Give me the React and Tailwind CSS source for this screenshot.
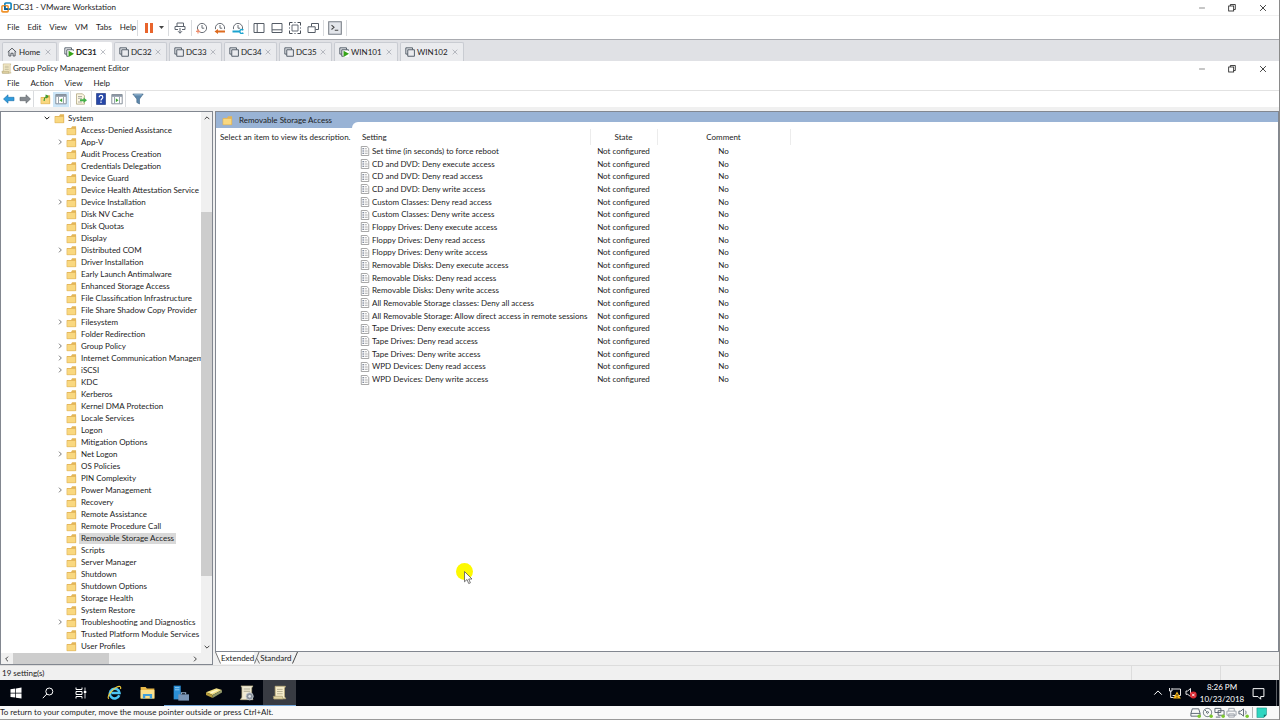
import { useState } from "react";

const vmTabs = [
  { name: "DC31", running: true, width: "w-[53px]" },
  { name: "DC32", width: "w-[53px]" },
  { name: "DC33", width: "w-[53px]" },
  { name: "DC34", width: "w-[53px]" },
  { name: "DC35", width: "w-[53px]" },
  { name: "WIN101", running: true, width: "w-[64px]" },
  { name: "WIN102", width: "w-[64px]" },
];

const treeItems = [
  { name: "Access-Denied Assistance" },
  { name: "App-V", children: true },
  { name: "Audit Process Creation" },
  { name: "Credentials Delegation" },
  { name: "Device Guard" },
  { name: "Device Health Attestation Service" },
  { name: "Device Installation", children: true },
  { name: "Disk NV Cache" },
  { name: "Disk Quotas" },
  { name: "Display" },
  { name: "Distributed COM", children: true },
  { name: "Driver Installation" },
  { name: "Early Launch Antimalware" },
  { name: "Enhanced Storage Access" },
  { name: "File Classification Infrastructure" },
  { name: "File Share Shadow Copy Provider" },
  { name: "Filesystem", children: true },
  { name: "Folder Redirection" },
  { name: "Group Policy", children: true },
  { name: "Internet Communication Management", children: true },
  { name: "iSCSI", children: true },
  { name: "KDC" },
  { name: "Kerberos" },
  { name: "Kernel DMA Protection" },
  { name: "Locale Services" },
  { name: "Logon" },
  { name: "Mitigation Options" },
  { name: "Net Logon", children: true },
  { name: "OS Policies" },
  { name: "PIN Complexity" },
  { name: "Power Management", children: true },
  { name: "Recovery" },
  { name: "Remote Assistance" },
  { name: "Remote Procedure Call" },
  { name: "Removable Storage Access" },
  { name: "Scripts" },
  { name: "Server Manager" },
  { name: "Shutdown" },
  { name: "Shutdown Options" },
  { name: "Storage Health" },
  { name: "System Restore" },
  { name: "Troubleshooting and Diagnostics", children: true },
  { name: "Trusted Platform Module Services" },
  { name: "User Profiles" },
];

const settings = [
  "Set time (in seconds) to force reboot",
  "CD and DVD: Deny execute access",
  "CD and DVD: Deny read access",
  "CD and DVD: Deny write access",
  "Custom Classes: Deny read access",
  "Custom Classes: Deny write access",
  "Floppy Drives: Deny execute access",
  "Floppy Drives: Deny read access",
  "Floppy Drives: Deny write access",
  "Removable Disks: Deny execute access",
  "Removable Disks: Deny read access",
  "Removable Disks: Deny write access",
  "All Removable Storage classes: Deny all access",
  "All Removable Storage: Allow direct access in remote sessions",
  "Tape Drives: Deny execute access",
  "Tape Drives: Deny read access",
  "Tape Drives: Deny write access",
  "WPD Devices: Deny read access",
  "WPD Devices: Deny write access",
];

/* ---------- icons ---------- */

function Icon({ size = 12, children }) {
  return (
    <svg width={size} height={size} viewBox="0 0 12 12" fill="none" className="block shrink-0" aria-hidden="true">
      {children}
    </svg>
  );
}

const VmwareLogo = () => (
  <Icon size={11}>
    <rect x="4.2" y="1" width="6.8" height="6.8" rx="1" stroke="#0a7fb8" strokeWidth="1.7" />
    <rect x="1" y="4" width="6.8" height="6.8" rx="1" stroke="#f0932b" strokeWidth="1.7" />
    <path d="M4.2 4v3.8H8" stroke="#0a5f95" strokeWidth="1.7" />
  </Icon>
);

const MinimizeIcon = () => (
  <Icon size={10}>
    <path d="M2.500 6h7" stroke="#666" strokeWidth="0.900" />
  </Icon>
);

const RestoreIcon = () => (
  <Icon size={10}>
    <rect x="2" y="3.6" width="6" height="6" stroke="#222" />
    <path d="M4 3.6V1.8h6v6H8" stroke="#222" />
  </Icon>
);

const CloseIcon = ({ size = 10, color = "#222" }) => (
  <Icon size={size}>
    <path d="M2.500 2.500l7 7M9.500 2.500l-7 7" stroke={color} />
  </Icon>
);

const PauseIcon = () => (
  <Icon>
    <rect x="2" y="1" width="3" height="10" fill="#e8642c" />
    <rect x="7" y="1" width="3" height="10" fill="#e8642c" />
  </Icon>
);

const CaretIcon = () => (
  <svg width="5" height="3" viewBox="0 0 5 3" aria-hidden="true">
    <path d="M0 0h5L2.500 3z" fill="#444" />
  </svg>
);

const SendKeysIcon = () => (
  <Icon>
    <path d="M3 4.500V1h6.500v3.500M1 4.500h10v3H8M1 4.500v3h3" stroke="#5d646e" />
    <path d="M6 6v5.200M4 9.200l2 2 2-2" stroke="#5d646e" />
  </Icon>
);

const SnapshotIcon = ({ accent, kind }) => (
  <Icon>
    <circle cx="6" cy="6" r="4.600" stroke="#5a6069" strokeWidth="0.900" />
    <path d="M6 3v3.200h2.200" stroke="#5a6069" strokeWidth="0.900" />
    {kind === "take" && <path d="M2 7v4.500M0 9.300h4.200" stroke={accent} strokeWidth="1.200" />}
    {kind === "revert" && (
      <>
        <path d="M0 7.200h12V12H0z" fill="#fff" />
        <path d="M0.500 9.500L4 7v1.500h7v2H4V12z" fill={accent} />
      </>
    )}
    {kind === "manage" && (
      <>
        <path d="M0 7.200h12V12H0z" fill="#fff" />
        <path d="M.5 9.500h7" stroke={accent} strokeWidth="2" />
        <path d="M11.300 8.200a2 2 0 1 0 0 2.600" stroke={accent} strokeWidth="1.500" />
      </>
    )}
  </Icon>
);

const SidebarIcon = () => (
  <Icon>
    <path d="M1 1.500h10v9H1zM4.200 1.500v9" stroke="#555c66" />
  </Icon>
);

const ThumbnailBarIcon = () => (
  <Icon>
    <path d="M1 1.500h10v9H1zM1 7.800h10" stroke="#555c66" />
  </Icon>
);

const FullScreenIcon = () => (
  <Icon>
    <path d="M.5 3.500v-3h3M8.500.5h3v3M11.500 8.500v3h-3M3.500 11.500h-3v-3" stroke="#454b54" />
    <path d="M3 3h6v6H3z" stroke="#666d77" />
    <path d="M5 .5h2M5 11.500h2M.5 5v2M11.500 5v2" stroke="#9aa0a8" />
  </Icon>
);

const UnityIcon = () => (
  <Icon>
    <path d="M4.500 4.500v-3h7v6h-3" stroke="#555c66" />
    <path d="M1 4.800h7.200v5.700H1z" stroke="#555c66" />
  </Icon>
);

const ConsoleIcon = () => (
  <Icon size={14}>
    <path d="M.6.600h10.800v10.800H.6z" stroke="#777d86" strokeWidth="0.900" fill="#e3e6eb" />
    <path d="M3 3.500l2.200 1.900L3 7.300M5.800 8h3" stroke="#444" strokeWidth="0.900" />
  </Icon>
);

const HomeIcon = () => (
  <Icon size={10}>
    <path d="M1 6l5-4.600L11 6M2.300 5.200v5.600h2.400V7.500h2.600v3.300h2.400V5.200" stroke="#4a5058" strokeWidth="1.100" />
  </Icon>
);

const VmIcon = ({ running }) => (
  <Icon size={10}>
    <path d="M3.300 8.500H1V1h8v2" stroke="#4a5560" strokeWidth="1.100" />
    <path d="M3.300 3.300h8v7.800h-8z" stroke="#4a5560" strokeWidth="1.100" />
    {running && (
      <>
        <path d="M5.500 4.500H12V12H5.500z" fill="#fff" />
        <path d="M5.500 4.500l6.500 3.700L5.500 12z" fill="#36a318" />
      </>
    )}
  </Icon>
);

const ScrollIcon = ({ size = 11 }) => (
  <Icon size={size}>
    <path d="M2.500 1h8.300l-.8 1.600v6.600l1 1.800H1.500L2.600 9.200z" fill="#f6ecc9" stroke="#b9a976" strokeWidth="0.600" />
    <path d="M4 3.500h4.500M4 5.200h4.500M4 7h4.500" stroke="#b1a98c" strokeWidth="0.700" />
    <path d="M1 9h7.300l.6 2.200H1.500z" fill="#e2d5a4" stroke="#a39668" strokeWidth="0.500" />
  </Icon>
);

const ArrowIcon = ({ color, edge, flip }) => (
  <Icon>
    <path
      d={flip ? "M11.500 6L7 1.800v2.500H1v3.400h6v2.500z" : "M.5 6L5 1.800v2.500h6v3.400H5v2.500z"}
      fill={color}
      stroke={edge}
      strokeWidth="0.600"
    />
  </Icon>
);

const FolderIcon = ({ up }) => (
  <Icon size={11}>
    <path d="M1 3.300h4.500l1.200-2h4.300v9.200H1z" fill="#e3b658" />
    <path d="M1 3.800h9.600v6.900H1z" fill="#f9d880" stroke="#d9a94c" strokeWidth="0.500" />
    {up && <path d="M4.500 7.500C4.500 4.500 6 3 8 2.500M6 1l2.600 1.300L7 4.500" stroke="#2f9a2f" strokeWidth="1.200" />}
  </Icon>
);

const PaneIcon = ({ right }) => (
  <Icon>
    <path d="M.8 1.500h10.400v9.300H.8z" fill="#fff" stroke="#7d8792" strokeWidth="0.900" />
    <path d="M1 2h10v1.800H1z" fill="#8c98a6" />
    <path d="M3.500 4v6.500M8.500 4v6.500" stroke="#8c98a6" strokeWidth="0.900" />
    <path d={right ? "M4.800 5.200L7.500 7.200 4.800 9.200z" : "M7.200 5.200L4.500 7.200l2.700 2z"} fill="#3fa535" />
  </Icon>
);

const ExportIcon = () => (
  <Icon>
    <path d="M1.500.8h6l2 2v8.400h-8z" fill="#fbf6e2" stroke="#a79c72" strokeWidth="0.700" />
    <path d="M3 3.500h4M3 5.300h4M3 9h4" stroke="#8e8e8e" strokeWidth="0.700" />
    <path d="M5 6.200h3.500V4.500L12 7.200 8.500 10V8.300H5z" fill="#43b049" />
  </Icon>
);

const HelpIcon = () => (
  <Icon>
    <path d="M1.500.5h9v11h-9z" fill="#2647a8" stroke="#162f78" strokeWidth="0.600" />
    <path d="M4.200 4.200c0-2.400 3.600-2.300 3.600 0C7.800 5.700 6 5.700 6 7.400M6 8.500V10" stroke="#fff" strokeWidth="1.200" />
  </Icon>
);

const FilterIcon = () => (
  <Icon>
    <path d="M.8 1h10.400L7.500 6v5L4.800 9.500V6z" fill="#5d87ab" stroke="#3e6487" strokeWidth="0.600" />
    <path d="M2.200 1.800h7.600" stroke="#b3cde2" strokeWidth="0.800" />
  </Icon>
);

const SettingIcon = () => (
  <Icon size={10}>
    <path d="M1.500.6h6.800l2.200 2.200v8.600h-9z" fill="#fff" stroke="#8a8a8a" strokeWidth="0.900" />
    <path d="M3 3.300h1.600M3 6h1.600M3 8.700h1.600" stroke="#3c4a66" strokeWidth="1.300" />
    <path d="M5.600 3.300h2.600M5.600 6h3.600M5.600 8.700h3.600" stroke="#8f8f8f" strokeWidth="0.900" />
  </Icon>
);

const Chevron = ({ dir, color = "#444" }) => {
  const paths = {
    right: "M4.500 2.500L8 6l-3.500 3.500",
    left: "M7.500 2.500L4 6l3.500 3.500",
    up: "M2.500 7.800L6 4.300l3.500 3.500",
    down: "M2.500 4.200L6 7.700l3.500-3.500",
  };
  return (
    <Icon size={8}>
      <path d={paths[dir]} stroke={color} strokeWidth="1.500" />
    </Icon>
  );
};

/* ---------- shared pieces ---------- */

function WindowButtons() {
  return (
    <div className="ml-auto flex items-center">
      <button aria-label="Minimize" className="flex w-[30px] justify-center"><MinimizeIcon /></button>
      <button aria-label="Restore" className="flex w-[30px] justify-center"><RestoreIcon /></button>
      <button aria-label="Close" className="flex w-8 justify-center"><CloseIcon /></button>
    </div>
  );
}

const Sep = () => <div className="h-4 w-px bg-[#d9dbde]" />;

function ToolButton({ label, children, className = "w-[18px]" }) {
  return (
    <button aria-label={label} className={`flex h-[15px] items-center justify-center ${className}`}>
      {children}
    </button>
  );
}

/* ---------- VMware chrome ---------- */

function VmwareHeader() {
  return (
    <>
      <header className="flex h-[15px] items-center pl-px">
        <VmwareLogo />
        <h1 className="ml-px">DC31 - VMware Workstation</h1>
        <WindowButtons />
      </header>

      <div className="flex h-6 items-center border-t border-[#f0f0f0]">
        <nav className="flex w-[137px] gap-2 pl-[7px]">
          <button>File</button>
          <button>Edit</button>
          <button>View</button>
          <button>VM</button>
          <button>Tabs</button>
          <button>Help</button>
        </nav>
        <Sep />
        <button aria-label="Suspend" className="flex w-[30px] items-center justify-center gap-1">
          <PauseIcon />
          <CaretIcon />
        </button>
        <Sep />
        <ToolButton label="Send Ctrl+Alt+Del" className="w-[22px]"><SendKeysIcon /></ToolButton>
        <Sep />
        <div className="flex px-px">
          <ToolButton label="Take snapshot"><SnapshotIcon kind="take" accent="#f09070" /></ToolButton>
          <ToolButton label="Revert snapshot"><SnapshotIcon kind="revert" accent="#dd6b1f" /></ToolButton>
          <ToolButton label="Manage snapshots"><SnapshotIcon kind="manage" accent="#1ba3cf" /></ToolButton>
        </div>
        <Sep />
        <div className="flex px-px">
          <ToolButton label="Show library"><SidebarIcon /></ToolButton>
          <ToolButton label="Show thumbnail bar"><ThumbnailBarIcon /></ToolButton>
          <ToolButton label="Full screen"><FullScreenIcon /></ToolButton>
          <ToolButton label="Unity"><UnityIcon /></ToolButton>
        </div>
        <Sep />
        <div className="px-1">
          <ToolButton label="Console view" className="w-[14px]"><ConsoleIcon /></ToolButton>
        </div>
        <Sep />
      </div>
    </>
  );
}

function VmTab({ icon, name, width, active, onClick }) {
  return (
    <div
      className={`flex items-center rounded-t-xs border border-b-0 pl-1 pr-1 ${width} ${
        active ? "border-white bg-white font-bold" : "border-[#c9ccd2] bg-[#eaebee]"
      }`}
    >
      <button onClick={onClick} className="flex items-center gap-[2px]">
        {icon}
        {name}
      </button>
      <button aria-label={`Close ${name}`} className="ml-auto">
        <CloseIcon size={8} color="#9a9fa7" />
      </button>
    </div>
  );
}

function VmTabs() {
  const [active, setActive] = useState("DC31");

  return (
    <nav className="flex h-[22px] items-stretch gap-[2px] border-t border-[#a9abb0] bg-[#e0e1e5] pl-[2px] pt-[2px]">
      <VmTab icon={<HomeIcon />} name="Home" width="w-[55px]" active={active === "Home"} onClick={() => setActive("Home")} />
      {vmTabs.map((tab) => (
        <VmTab
          key={tab.name}
          icon={<VmIcon running={tab.running} />}
          name={tab.name}
          width={tab.width}
          active={active === tab.name}
          onClick={() => setActive(tab.name)}
        />
      ))}
    </nav>
  );
}

/* ---------- Group Policy Management Editor ---------- */

function EditorHeader() {
  return (
    <>
      <header className="flex h-[15px] items-center gap-px pl-px">
        <ScrollIcon />
        <h2>Group Policy Management Editor</h2>
        <WindowButtons />
      </header>
      <nav className="flex h-[15px] items-center gap-[11px] border-b border-[#e2e2e2] pl-[7px]">
        <button>File</button>
        <button>Action</button>
        <button>View</button>
        <button>Help</button>
      </nav>
      <div className="flex h-4 items-center pl-px">
        <ToolButton label="Back" className="w-4"><ArrowIcon color="#2f9bdc" edge="#1c6fa8" /></ToolButton>
        <ToolButton label="Forward" className="w-4"><ArrowIcon flip color="#858a90" edge="#5f6469" /></ToolButton>
        <Sep />
        <div className="flex pl-[3px] pr-px">
          <ToolButton label="Up one level" className="w-4"><FolderIcon up /></ToolButton>
          <ToolButton label="Show/hide console tree" className="w-4 bg-[#cde6f8]"><PaneIcon /></ToolButton>
        </div>
        <Sep />
        <ToolButton label="Export list" className="w-5"><ExportIcon /></ToolButton>
        <Sep />
        <div className="flex pl-px">
          <ToolButton label="Help topics" className="w-4"><HelpIcon /></ToolButton>
          <ToolButton label="Show/hide action pane" className="w-4"><PaneIcon right /></ToolButton>
        </div>
        <Sep />
        <ToolButton label="Filter" className="w-6"><FilterIcon /></ToolButton>
      </div>
    </>
  );
}

function TreePane() {
  const [selected, setSelected] = useState("Removable Storage Access");

  return (
    <aside className="flex w-[213px] shrink-0 flex-col border border-[#828790] bg-white">
      <div className="flex min-h-0 flex-1">
        <ul className="min-w-0 flex-1 overflow-hidden">
          <li className="flex h-3 items-center pl-[42px]">
            <Chevron dir="down" color="#111" />
            <span className="ml-[3px] flex items-center gap-[3px]">
              <FolderIcon />
              System
            </span>
          </li>
          {treeItems.map((item) => (
            <li key={item.name} className="flex h-3 items-center pl-[55px]">
              <span className="w-[10px] shrink-0">{item.children && <Chevron dir="right" color="#777" />}</span>
              <button
                onClick={() => setSelected(item.name)}
                className="flex h-3 shrink-0 items-center gap-[2px] whitespace-nowrap"
              >
                <FolderIcon />
                <span className={`px-[2px] ${selected === item.name ? "bg-[#d9d9d9]" : ""}`}>{item.name}</span>
              </button>
            </li>
          ))}
        </ul>
        <div className="flex w-[11px] shrink-0 flex-col items-center bg-[#f0f0f0]">
          <button aria-label="Scroll up" className="flex h-3 items-center"><Chevron dir="up" /></button>
          <div className="grow-88" />
          <div className="w-full grow-363 bg-[#cdcdcd]" />
          <div className="grow-65" />
          <button aria-label="Scroll down" className="flex h-3 items-center"><Chevron dir="down" /></button>
        </div>
      </div>
      <div className="flex h-[11px] items-center bg-[#f0f0f0] pr-[11px]">
        <button aria-label="Scroll left" className="flex w-3 justify-center"><Chevron dir="left" /></button>
        <div className="h-full grow-95 bg-[#cdcdcd]" />
        <div className="grow-80" />
        <button aria-label="Scroll right" className="flex w-3 justify-center"><Chevron dir="right" /></button>
      </div>
    </aside>
  );
}

function SettingsTable() {
  return (
    <table className="ml-[6px] mt-[7px] h-[257px] w-[432px] table-fixed border-collapse">
      <colgroup>
        <col className="w-[232px]" />
        <col className="w-[67px]" />
        <col className="w-[133px]" />
      </colgroup>
      <thead>
        <tr className="h-4">
          <th className="border-r border-[#ececec] p-0 pl-1 text-left font-normal">Setting</th>
          <th className="border-r border-[#ececec] p-0 font-normal">State</th>
          <th className="border-r border-[#ececec] p-0 font-normal">Comment</th>
        </tr>
      </thead>
      <tbody>
        {settings.map((name) => (
          <tr key={name}>
            <td className="p-0 pl-[2px]">
              <div className="flex items-center gap-[2px] whitespace-nowrap">
                <SettingIcon />
                {name}
              </div>
            </td>
            <td className="p-0 text-center">Not configured</td>
            <td className="p-0 text-center">No</td>
          </tr>
        ))}
      </tbody>
    </table>
  );
}

function DetailPane() {
  return (
    <main className="flex min-w-0 flex-1 flex-col">
      <div className="flex min-h-0 flex-1 border border-[#828790] bg-[#99b3d5]">
        <section className="flex w-[136px] flex-col">
          <h3 className="flex h-4 items-center gap-[6px] pl-[6px]">
            <FolderIcon />
            Removable Storage Access
          </h3>
          <p className="flex-1 whitespace-nowrap bg-white pl-1 pt-1">Select an item to view its description.</p>
        </section>
        <section className="mt-[10px] flex-1 rounded-tl-md bg-white">
          <SettingsTable />
        </section>
      </div>
      <div className="flex h-[13px] items-start">
        <button className="flex items-center bg-white">
          <svg width="6" height="12" viewBox="0 0 6 12" aria-hidden="true">
            <path d="M0 0v12h5.500L0.500 0z" fill="#f0f0f0" />
            <path d="M.5 0l5 11.500" stroke="#555" strokeWidth="0.800" />
          </svg>
          Extended
        </button>
        <button className="flex items-center">
          <svg width="6" height="12" viewBox="0 0 6 12" fill="none" aria-hidden="true">
            <path d="M5 0L.5 11.500M2.500 6l3 5.500" stroke="#555" strokeWidth="0.800" />
          </svg>
          Standard
          <svg width="6" height="12" viewBox="0 0 6 12" aria-hidden="true">
            <path d="M5.500 0L.5 11.500" stroke="#333" strokeWidth="0.900" />
          </svg>
        </button>
      </div>
    </main>
  );
}

function EditorStatus() {
  return (
    <footer className="flex h-[15px] items-stretch border-t border-[#dcdcdc]">
      <p className="flex flex-1 items-center border-r border-[#dcdcdc] pl-[2px]">19 setting(s)</p>
      <div className="w-[89px] border-r border-[#dcdcdc]" />
      <div className="w-[58px]" />
    </footer>
  );
}

/* ---------- guest taskbar ---------- */

function TaskButton({ label, open, active, children }) {
  return (
    <button
      aria-label={label}
      className={`flex h-full w-[33px] items-center justify-center border-b ${
        open ? "border-[#76a9dc]" : "border-transparent"
      } ${active ? "bg-[#383b42]" : ""}`}
    >
      {children}
    </button>
  );
}

function Taskbar() {
  return (
    <div className="flex h-[26px] items-center bg-[#02060f] text-white">
      <button aria-label="Start" className="flex w-8 justify-center">
        <Icon size={12}>
          <path d="M.5 2.200L5.300 1.500v4.200H.5zM6 1.400L11.500.6v5.100H6zM.5 6.400h4.800v4.200L.5 9.900zM6 6.400h5.500v5.100L6 10.700z" fill="#fff" />
        </Icon>
      </button>
      <button aria-label="Search" className="flex w-8 justify-center">
        <Icon size={12}>
          <circle cx="7.300" cy="4.500" r="3.500" stroke="#fff" />
          <path d="M4.800 7L.8 11.200" stroke="#fff" />
        </Icon>
      </button>
      <button aria-label="Task view" className="flex w-[34px] justify-center">
        <Icon size={12}>
          <path d="M1 .5v2h6v-2M1 4.500h6v3H1zM1 11.500v-2h6v2" stroke="#fff" />
          <path d="M10 .5v11" stroke="#fff" strokeWidth="0.800" />
          <path d="M8.800 4h2.500v2H8.800z" fill="#fff" />
        </Icon>
      </button>
      <TaskButton label="Internet Explorer">
        <Icon size={15}>
          <path d="M9.800 8.200A3.900 3.900 0 1 1 10 6.300H3.500" stroke="#4cc4f2" strokeWidth="2" />
          <path d="M1.500 11C-.5 9.500 3.500 4 7.500 1.800c2.500-1.300 4-.8 3.300 1.400" stroke="#f5cf3c" strokeWidth="0.900" />
        </Icon>
      </TaskButton>
      <TaskButton label="File Explorer">
        <Icon size={15}>
          <path d="M.5 1.500h4l1 1.300h6v8H.5z" fill="#e8b84a" />
          <path d="M.5 4h11v6.800H.5z" fill="#fbe08c" />
          <path d="M2.300 10.800V7.200h7.400v3.600H7.800V8.800H4.200v2z" fill="#3f9fdc" />
        </Icon>
      </TaskButton>
      <div className="flex h-full">
        <TaskButton label="Server Manager" open>
          <Icon size={16}>
            <path d="M.5.5h5.300v10.300H.5z" fill="#2b8fd6" />
            <path d="M1.500 2h3.300M1.500 3.600h3.300" stroke="#a8d8f7" strokeWidth="0.600" />
            <path d="M4 7h8v4.700H4z" fill="#7b95b5" />
            <path d="M6.300 7V5.800h3.200V7" stroke="#9db3cc" strokeWidth="0.800" />
          </Icon>
        </TaskButton>
        <TaskButton label="Disk tool" open>
          <Icon size={16}>
            <path d="M0 5.500L7.800 2.500 12 3.700 5 7.500z" fill="#f0df86" />
            <path d="M0 5.500l5 2v2.300L0 7.500z" fill="#b59b3b" />
            <path d="M5 7.500l7-3.800v2L5 9.800z" fill="#8d9568" />
            <path d="M3 5.500l5-2 1.300.5-5 2.300z" fill="#fff8c8" />
          </Icon>
        </TaskButton>
        <TaskButton label="Group Policy Management" open>
          <Icon size={16}>
            <path d="M1.500.7h9l-1 1.500v7l1 1.800H1l1.200-1.800V2z" fill="#efe9d2" stroke="#b9b08a" strokeWidth="0.500" />
            <path d="M3.500 3h4.800M3.500 4.700h4.800" stroke="#9c9780" strokeWidth="0.600" />
            <circle cx="8" cy="8.500" r="2.700" fill="#8a929b" stroke="#c5cad0" strokeWidth="0.600" />
            <circle cx="8" cy="8.500" r="1" fill="#dfe3e7" />
          </Icon>
        </TaskButton>
        <TaskButton label="Group Policy Management Editor" open active>
          <ScrollIcon size={15} />
        </TaskButton>
      </div>

      <div className="ml-auto flex h-full items-center">
        <button aria-label="Show hidden icons" className="flex w-[18px] justify-center">
          <Icon size={10}>
            <path d="M1.500 8L6 3.500 10.500 8" stroke="#fff" strokeWidth="1.200" />
          </Icon>
        </button>
        <button aria-label="Network" className="flex w-4 justify-center">
          <Icon size={12}>
            <path d="M3.500 2h8v6.500h-8M.5 1v3h2.500V1M1.700 4v6.500h3" stroke="#fff" strokeWidth="0.900" />
            <path d="M8 4.500l3.800 7H4.200z" fill="#fbb917" />
            <path d="M8 7v2.300M8 10v.9" stroke="#222" strokeWidth="0.900" />
          </Icon>
        </button>
        <button aria-label="Volume" className="flex w-4 justify-center">
          <Icon size={12}>
            <path d="M1 4h1.700L5.500 1.500v8L2.700 7.300H1z" stroke="#fff" strokeWidth="0.900" />
            <circle cx="8.300" cy="8" r="3.400" fill="#d8262f" />
            <path d="M7 6.700l2.600 2.600M9.600 6.700L7 9.300" stroke="#fff" strokeWidth="0.900" />
          </Icon>
        </button>
        <time className="w-[46px] text-center leading-3">
          8:26 PM
          <br />
          10/23/2018
        </time>
        <button aria-label="Notifications" className="flex w-[26px] justify-center">
          <Icon size={13}>
            <path d="M1 1.500h10v7.300H8v2.500L5.500 8.800H1z" stroke="#fff" strokeWidth="0.900" />
          </Icon>
        </button>
        <button aria-label="Show desktop" className="ml-[5px] h-full w-[3px] border-l border-[#5a5d63]" />
      </div>
    </div>
  );
}

function DeviceIcon({ kind }) {
  const shapes = {
    disk: "M2.500 2h7l1.500 5v3H1V7zM1 7h10",
    cd: "M6 1.500a4.500 4.500 0 1 0 .01 0M6 5a1 1 0 1 0 .01 0M3 3l2 2",
    network: "M1 1.500h6.500v4.500H1zM4.500 4h6.500v5H4.500zM2 11h5",
    printer: "M3 4.500v-3h6v3M1 4.500h10v4.500H1zM3 7.500h6v3.500H3z",
    sound: "M1 4.500h2L6 2v8L3 7.500H1zM8 4c1 1 1 3 0 4",
  };
  return (
    <Icon size={11}>
      <path d={shapes[kind]} stroke={kind === "printer" ? "#9aa0a8" : "#56616d"} />
      {kind !== "printer" && <circle cx="10" cy="10" r="1.900" fill="#7cc82f" />}
    </Icon>
  );
}

function VmwareStatus() {
  return (
    <footer className="flex h-[14px] items-center border-b border-[#9a9a9a] bg-[#f9f9f9]">
      <p>To return to your computer, move the mouse pointer outside or press Ctrl+Alt.</p>
      <div className="ml-auto flex items-center gap-px pr-3">
        <DeviceIcon kind="disk" />
        <DeviceIcon kind="cd" />
        <DeviceIcon kind="network" />
        <DeviceIcon kind="printer" />
        <DeviceIcon kind="sound" />
        <div className="mx-[2px] h-[11px] w-px bg-[#b5b5b5]" />
        <Icon size={11}>
          <path d="M1 1h10.500v7.500l-3 3H1z" fill="#2fd6c0" stroke="#1c8f85" strokeWidth="0.600" />
          <path d="M11.500 8.500h-3v3z" fill="#176e68" />
        </Icon>
      </div>
    </footer>
  );
}

function Pointer() {
  return (
    <div className="pointer-events-none absolute left-[456px] top-[563px] size-[17px] rounded-full bg-[#fdf900]">
      <svg width="9" height="14" viewBox="0 0 9 14" className="absolute left-2 top-[8px]" aria-hidden="true">
        <path d="M.5.5v10.300L3 8.500l1.700 4 1.700-.7L4.700 8H8z" fill="#fff" stroke="#555" strokeWidth="0.800" />
      </svg>
    </div>
  );
}

export default function App() {
  return (
    <div className="relative flex h-screen flex-col overflow-hidden border-r border-[#8a8a8a] bg-white font-[Lato,'Noto_Sans',sans-serif] text-[8px] leading-[11px] text-[#1c1c1c]">
      <VmwareHeader />
      <VmTabs />
      <EditorHeader />
      <div className="flex min-h-0 flex-1 flex-col bg-[#f0f0f0] pt-1">
        <div className="flex min-h-0 flex-1 gap-[2px]">
          <TreePane />
          <DetailPane />
        </div>
        <EditorStatus />
      </div>
      <Taskbar />
      <VmwareStatus />
      <Pointer />
    </div>
  );
}
